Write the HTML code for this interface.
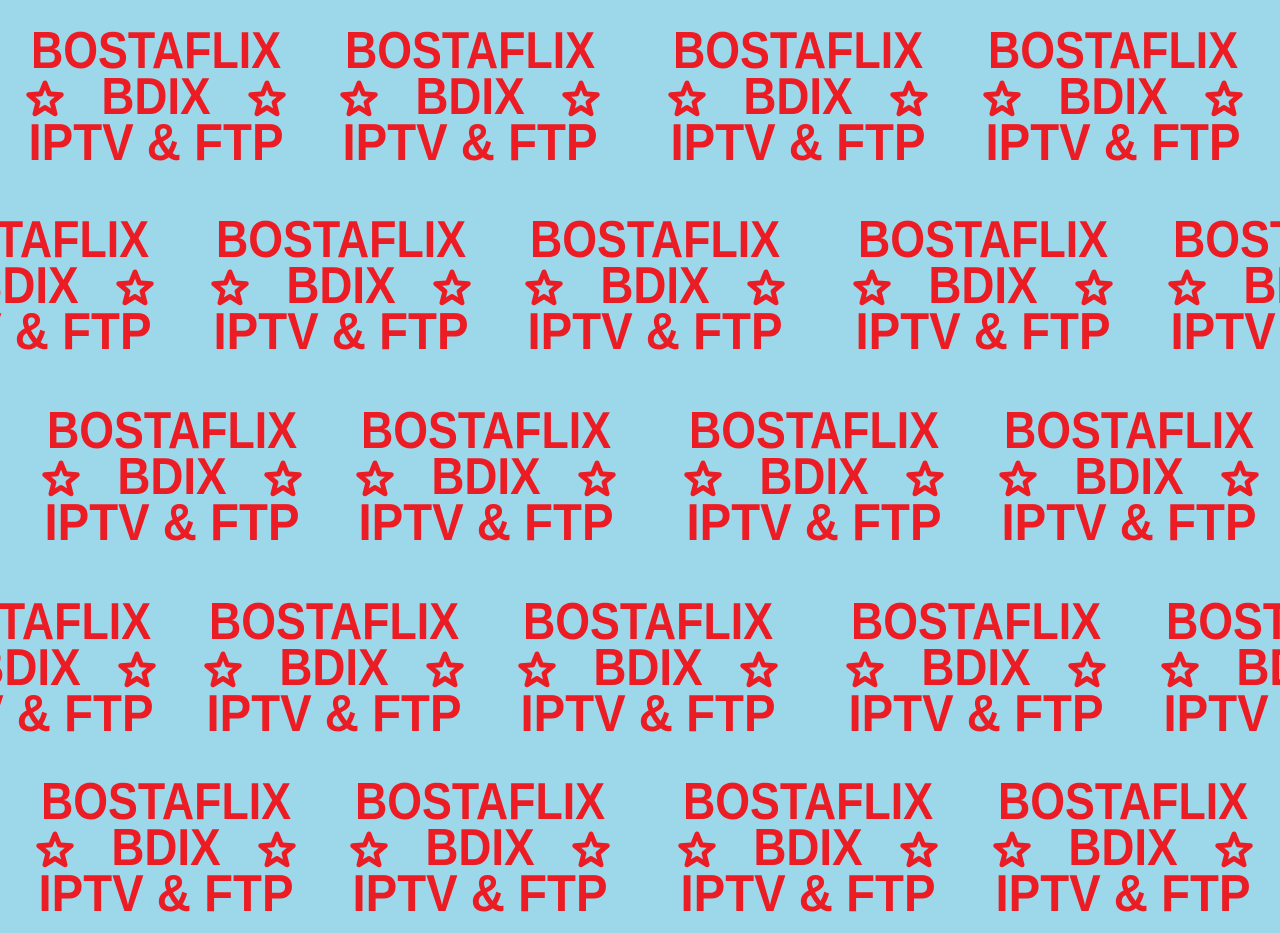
<!DOCTYPE html>
<html><head><meta charset="utf-8"><style>
html,body{margin:0;padding:0;overflow:hidden;width:1280px;height:933px}
#w{width:1280px;height:933px;background:#9cd8e9;position:relative;overflow:hidden;font-family:"Liberation Sans",sans-serif;font-weight:bold;color:#ec1c24}
.l{position:absolute;width:400px;text-align:center;font-size:52px;line-height:52px;white-space:nowrap}
.s{position:absolute;width:38px;height:38px}
</style></head><body><div id="w"></div>
<script>
var tiles=[[156,31],[470,31],[798,31],[1113,31],
[24,220],[341,220],[655,220],[983,220],[1298,220],
[172,411],[486,411],[814,411],[1129,411],
[26,602],[334,602],[648,602],[976,602],[1291,602],
[166,782],[480,782],[808,782],[1123,782]];
function star(){var p=[];for(var i=0;i<10;i++){var r=i%2?7.5:17,a=-Math.PI/2+i*Math.PI/5;p.push((19+r*Math.cos(a)).toFixed(1)+','+(20+r*Math.sin(a)).toFixed(1));}
return '<svg width="38" height="38" viewBox="0 0 38 38"><polygon points="'+p.join(' ')+'" fill="none" stroke="#ec1c24" stroke-width="5" stroke-linejoin="round"/></svg>';}
var h='';var st=star();
tiles.forEach(function(t){var cx=t[0],y=t[1];
h+='<div class="l" style="left:'+(cx-200)+'px;top:'+(y-6)+'px;transform:scaleX(0.86)">BOSTAFLIX</div>';
h+='<div class="l" style="left:'+(cx-200)+'px;top:'+(y+40)+'px;transform:scaleX(0.88)">BDIX</div>';
h+='<div class="l" style="left:'+(cx-200)+'px;top:'+(y+86)+'px;transform:scaleX(0.91)">IPTV &amp; FTP</div>';
h+='<div class="s" style="left:'+(cx-111-19)+'px;top:'+(y+49)+'px">'+st+'</div>';
h+='<div class="s" style="left:'+(cx+111-19)+'px;top:'+(y+49)+'px">'+st+'</div>';
});
document.getElementById('w').innerHTML=h;
</script>
</body></html>
